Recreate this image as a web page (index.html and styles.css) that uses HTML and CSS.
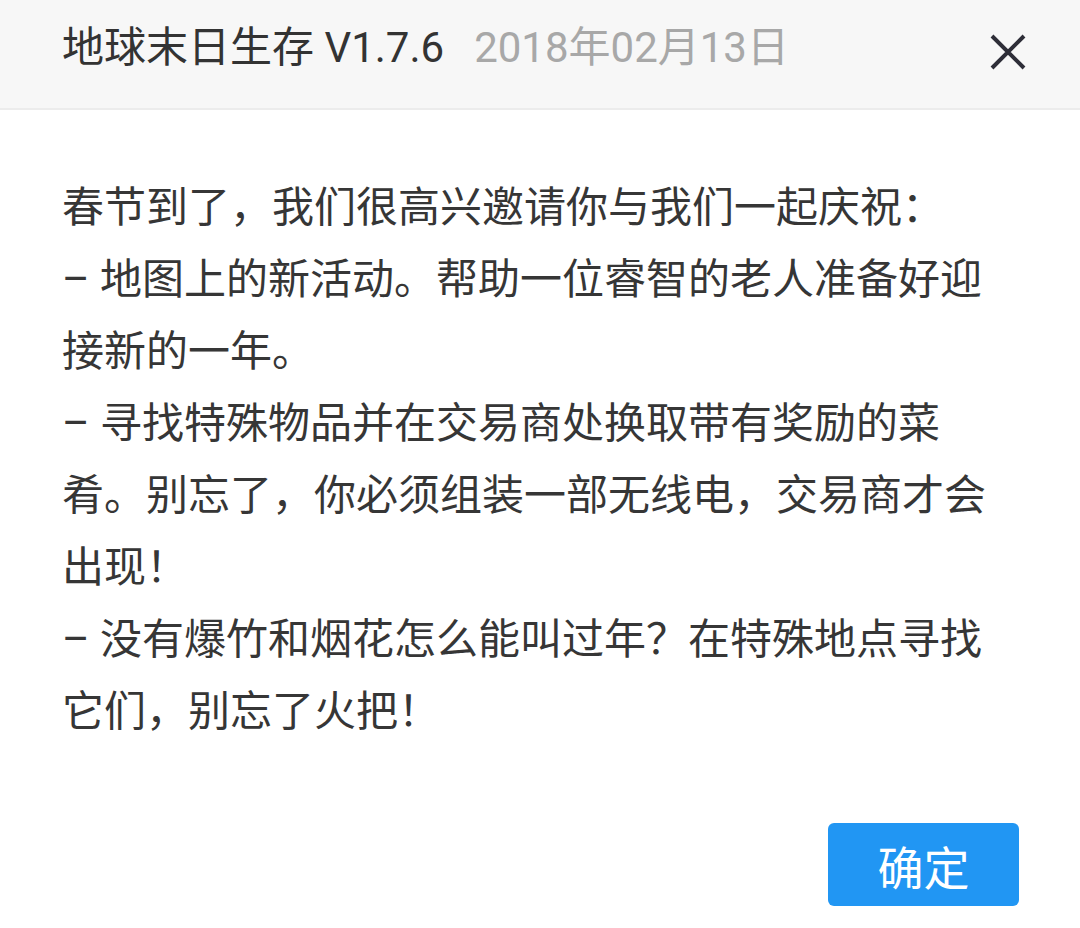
FILE: index.html
```html
<!DOCTYPE html>
<html lang="zh-CN">
<head>
<meta charset="utf-8">
<link rel="stylesheet" href="styles.css">
</head>
<body>
<div class="dialog">
  <header class="header">
    <div class="title">地球末日生存 V1.7.6<span class="date">2018年02月13日</span></div>
    <button class="close" aria-label="关闭">
      <svg width="36" height="36" viewBox="0 0 36 36"><path d="M2 2 L34 34 M34 2 L2 34" stroke="#2e2e38" stroke-width="4" fill="none"/></svg>
    </button>
  </header>
  <main class="body">
    <p class="text">春节到了，我们很高兴邀请你与我们一起庆祝：<br>– 地图上的新活动。帮助一位睿智的老人准备好迎接新的一年。<br>– 寻找特殊物品并在交易商处换取带有奖励的菜肴。别忘了，你必须组装一部无线电，交易商才会出现！<br>– 没有爆竹和烟花怎么能叫过年？在特殊地点寻找它们，别忘了火把！</p>
  </main>
  <footer class="footer">
    <button class="ok">确定</button>
  </footer>
</div>
</body>
</html>
```
FILE: styles.css
```css
html, body {
  margin: 0;
  padding: 0;
  background: #ffffff;
}
body {
  width: 1080px;
  height: 928px;
  overflow: hidden;
  font-family: Roboto, "Noto Sans CJK SC", sans-serif;
  color: #333333;
}
.dialog {
  display: flex;
  flex-direction: column;
  height: 928px;
}
.header {
  height: 108px;
  background: #f7f7f7;
  border-bottom: 2px solid #ececec;
  display: flex;
  align-items: center;
  justify-content: space-between;
  padding: 0 54px 0 62px;
  box-sizing: content-box;
}
.title {
  font-size: 42px;
  color: #333333;
  line-height: 1;
  padding-bottom: 12px;
}
.date {
  color: #a8a8a8;
  margin-left: 30px;
}
.close {
  border: 0;
  background: transparent;
  padding: 0;
  width: 36px;
  height: 36px;
  margin-bottom: 4px;
  display: block;
}
.close svg { display: block; }
.body {
  padding: 62px 62px 0 62px;
}
.text {
  margin: 0;
  font-size: 42px;
  line-height: 72px;
  color: #363636;
}
.footer {
  margin-top: auto;
  display: flex;
  justify-content: flex-end;
  padding: 0 61px 22px 0;
}
.ok {
  width: 191px;
  height: 83px;
  border: 0;
  border-radius: 6px;
  background: #2196f3;
  color: #ffffff;
  font-family: "Noto Sans CJK SC", sans-serif;
  font-size: 46px;
  padding: 0;
}
```
